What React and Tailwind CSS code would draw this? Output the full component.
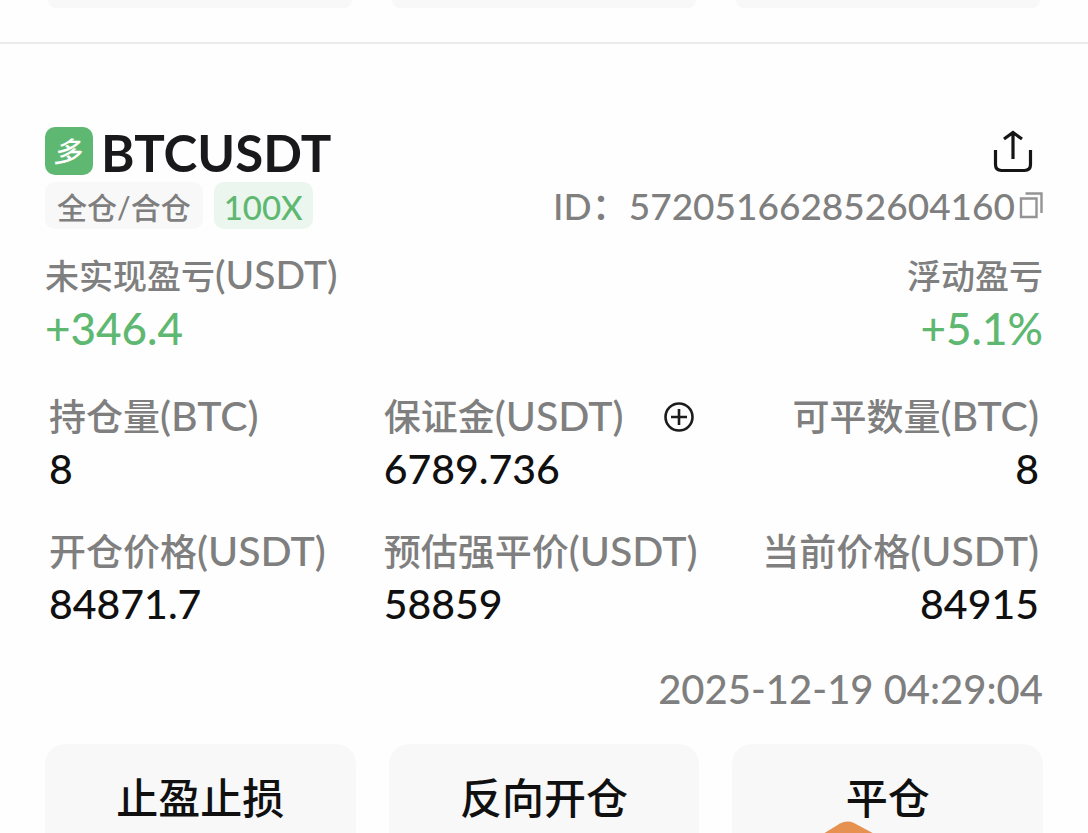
const stats = [
    {label: '持仓量', unit: '(BTC)', value: '8'},
    {label: '保证金', unit: '(USDT)', value: '6789.736', canAdd: true},
    {label: '可平数量', unit: '(BTC)', value: '8', right: true},
    {label: '开仓价格', unit: '(USDT)', value: '84871.7'},
    {label: '预估强平价', unit: '(USDT)', value: '58859'},
    {label: '当前价格', unit: '(USDT)', value: '84915', right: true},
];

const ShareIcon = () => (
    <svg width="40" height="44" viewBox="0 0 40 44" fill="none" stroke="#151515" strokeWidth="3.2">
        <path d="M2.5 21v14.5q0 6 6 6h23q6 0 6-6V21" />
        <path d="M20 30V4M11 10L20 3.500l9 6.500" />
    </svg>
);

const CopyIcon = () => (
    <svg width="24" height="28" viewBox="0 0 24 28" fill="none" stroke="#949494" strokeWidth="2.400">
        <path d="M2 6.500h15.500v18.500H2z" />
        <path d="M6.500 1.500h16V21" />
    </svg>
);

const PlusCircleIcon = () => (
    <svg width="32" height="32" viewBox="0 0 32 32" fill="none" stroke="#1c1c1c" strokeWidth="2.600">
        <circle cx="16" cy="16" r="13.500" />
        <path d="M16 8v16M8 16h16" />
    </svg>
);

const Stat = ({label, unit, value, canAdd, right}) => {
    return (
        <div className={right ? 'text-right' : 'text-left'}>
            <dt className="flex items-center gap-10 whitespace-nowrap text-[37px] text-[#7f7f7f]">
                <span className="flex-1 has-[+button]:flex-none">
                    {label}
                    <span className="text-[41px] leading-none">{unit}</span>
                </span>
                {canAdd && (
                    <button type="button" aria-label="追加保证金" className="cursor-pointer">
                        <PlusCircleIcon />
                    </button>
                )}
            </dt>
            <dd className="text-[41px] text-[#101010]">{value}</dd>
        </div>
    );
};

const ActionButton = ({children}) => (
    <button type="button" className="h-[108px] cursor-pointer rounded-[20px] bg-[#f8f8f8] text-[42px] font-medium text-[#101010]">
        {children}
    </button>
);

const App = () => {
    return (
        <div className="h-screen overflow-hidden bg-[#fefefe] font-['Lato','Noto_Sans_CJK_SC',sans-serif] font-medium leading-[52px]">
            {/* 상단 카드의 버튼 끝부분 */}
            <div className="grid grid-cols-3 gap-10 border-b-2 border-[#ebebeb] px-12 pb-[34px]">
                <div className="h-2 rounded-b-lg bg-[#f8f8f8]"></div>
                <div className="h-2 rounded-b-lg bg-[#f8f8f8]"></div>
                <div className="h-2 rounded-b-lg bg-[#f8f8f8]"></div>
            </div>

            <main className="px-[45px] pt-[83px]">
                <div className="flex h-12 items-center justify-between">
                    <div className="flex items-center gap-2">
                        <span className="flex size-12 items-center justify-center rounded-[10px] bg-[#5fb871] pr-1 text-[28px] italic text-white">多</span>
                        <h1 className="pt-1 text-[51px] font-bold text-[#19191b]">BTCUSDT</h1>
                    </div>
                    <button type="button" aria-label="分享" className="mr-[10px] cursor-pointer">
                        <ShareIcon />
                    </button>
                </div>

                <div className="mt-[7px] flex h-[47px] items-center justify-between">
                    <div className="flex gap-[11px] leading-[50px]">
                        <span className="h-[47px] rounded-[10px] bg-[#f8f8f8] px-3 text-[30px] text-[#7f7f7f]">全仓/合仓</span>
                        <span className="h-[47px] rounded-[10px] bg-[#eaf6ee] px-[10px] text-[33px] text-[#5fb871]">100X</span>
                    </div>
                    <div className="flex items-center gap-1 text-[37px] text-[#7f7f7f]">
                        <span>ID：572051662852604160</span>
                        <button type="button" aria-label="复制ID" className="cursor-pointer">
                            <CopyIcon />
                        </button>
                    </div>
                </div>

                <dl className="mt-[21px] flex justify-between">
                    <div>
                        <dt className="text-[34px] text-[#7f7f7f]">
                            未实现盈亏<span className="text-[39px] leading-none">(USDT)</span>
                        </dt>
                        <dd className="text-[44px] text-[#5fb871]">+346.4</dd>
                    </div>
                    <div className="text-right">
                        <dt className="text-[34px] text-[#7f7f7f]">浮动盈亏</dt>
                        <dd className="text-[44px] text-[#5fb871]">+5.1%</dd>
                    </div>
                </dl>

                <dl className="mt-[37px] grid grid-cols-[335fr_340fr_316fr] gap-y-[31px] px-1">
                    {stats.map((stat) => (
                        <Stat key={stat.label} {...stat} />
                    ))}
                </dl>

                <div className="mt-[33px] text-right text-[40px] text-[#7f7f7f]">2025-12-19 04:29:04</div>

                <div className="mt-[29px] grid grid-cols-3 gap-[33px]">
                    <ActionButton>止盈止损</ActionButton>
                    <ActionButton>反向开仓</ActionButton>
                    <div className="relative grid">
                        <ActionButton>平仓</ActionButton>
                        <svg className="pointer-events-none absolute left-[88px] top-[77px]" width="60" height="32" viewBox="0 0 60 32">
                            <path d="M-2 16L20 2.500Q27 -1 34 2L62 17V32H-2z" fill="#e79150" />
                        </svg>
                    </div>
                </div>
            </main>
        </div>
    );
};

export default App;
